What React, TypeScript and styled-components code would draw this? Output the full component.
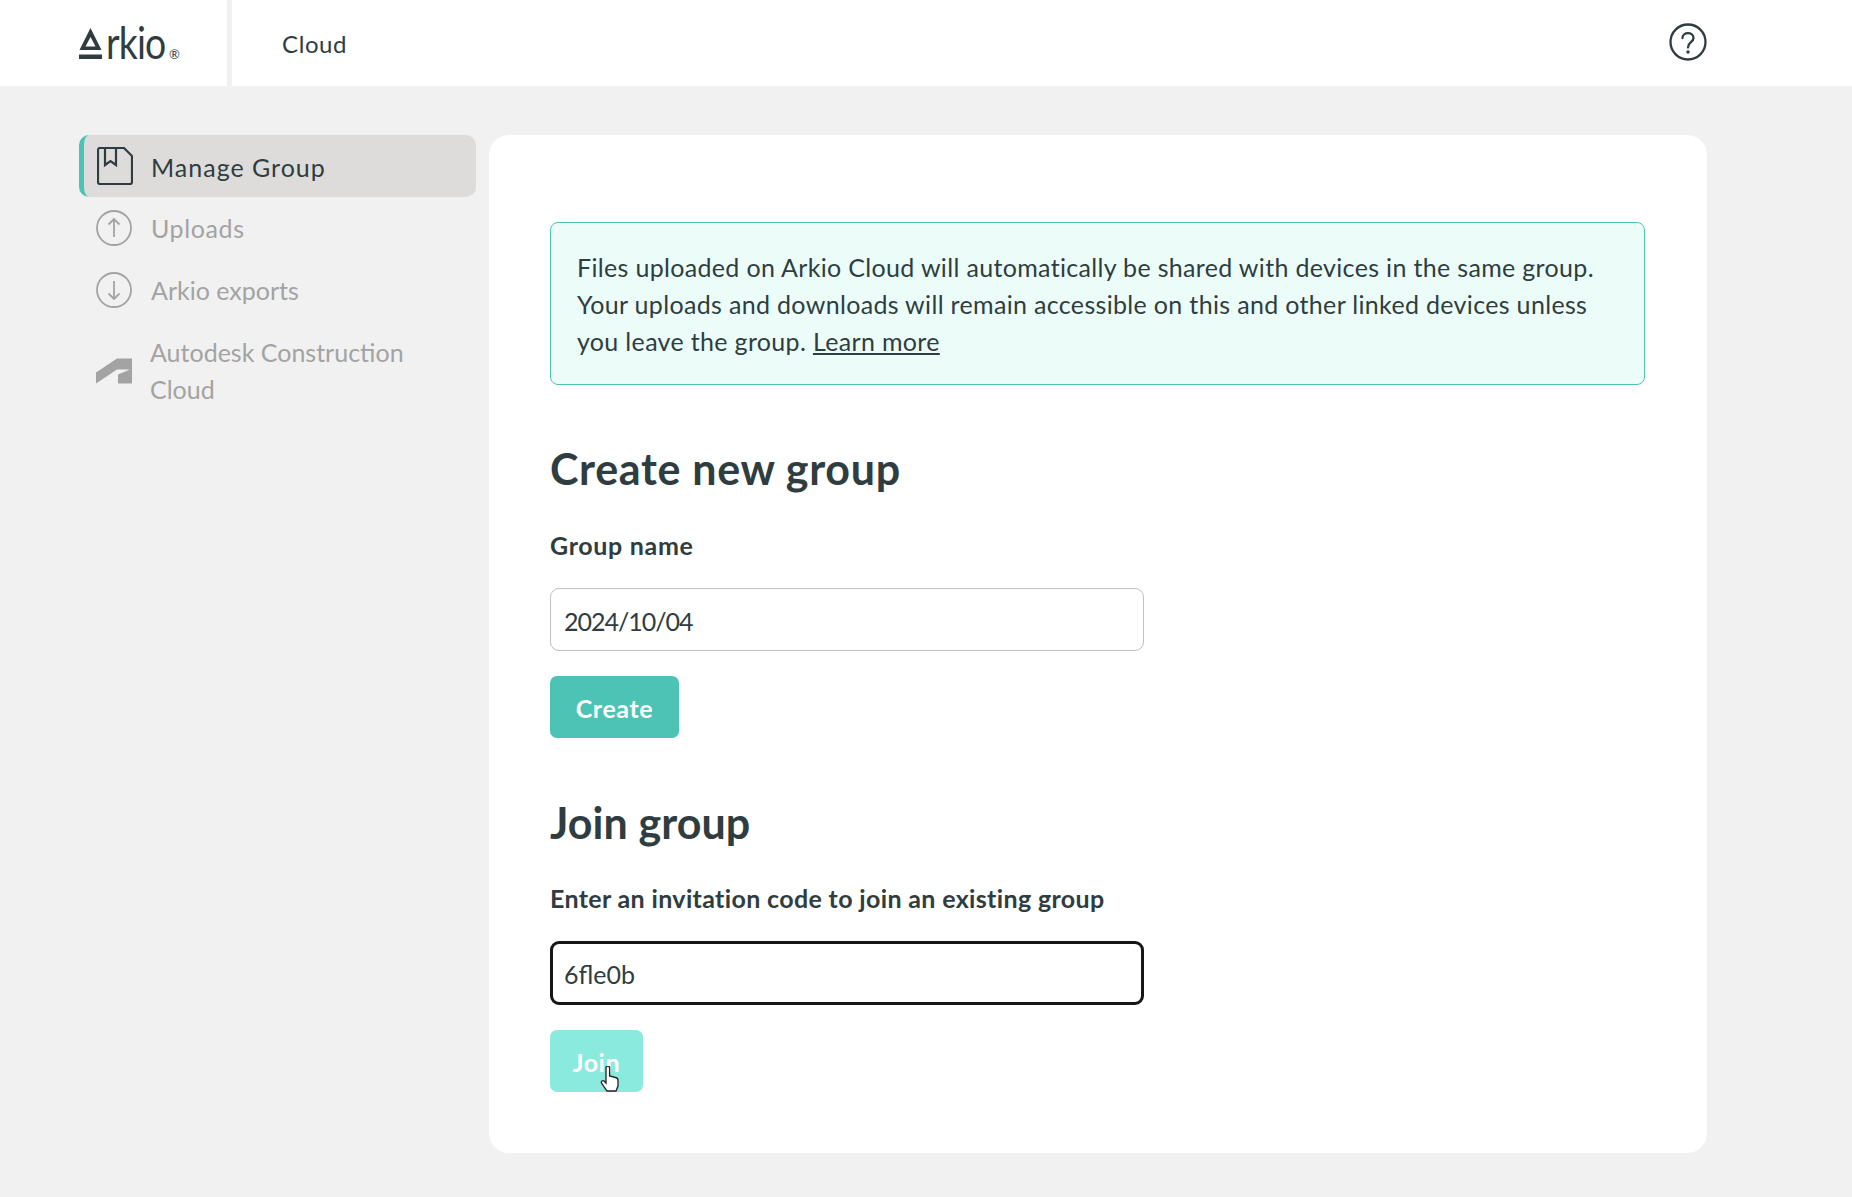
import React from "react";
import styled, { createGlobalStyle } from "styled-components";

const FONT = `"Lato", "Liberation Sans", sans-serif`;

const Global = createGlobalStyle`
  html, body { margin: 0; padding: 0; background: #f1f1f1; }
  body { font-family: ${FONT}; color: #2f3d40; }
  * { box-sizing: border-box; }
`;

const Page = styled.div`
  width: 1852px;
  height: 1197px;
  display: flex;
  flex-direction: column;
  background: #f1f1f1;
  overflow: hidden;
`;

const Header = styled.header`
  height: 86px;
  background: #fff;
  display: flex;
  align-items: stretch;
  padding-right: 145px;
`;

const LogoCell = styled.div`
  width: 232px;
  padding-left: 79px;
  border-right: 5px solid #f1f1f1;
  display: flex;
  align-items: center;
`;

const LogoWord = styled.div`
  display: flex;
  align-items: baseline;
  font-size: 44px;
  font-weight: 400;
  color: #2f3d40;
  line-height: 1;
  margin-top: -2px;
`;

const LogoMark = styled.svg`
  width: 23px;
  height: 31px;
  margin-right: 4px;
  align-self: flex-end;
  margin-bottom: 5px;
`;

const LogoLetters = styled.span`
  display: inline-block;
  letter-spacing: -1px;
  transform: scaleX(0.85);
  transform-origin: left bottom;
  margin-right: -10px;
`;

const Reg = styled.span`
  font-size: 13px;
  margin-left: 3px;
`;

const Title = styled.div`
  flex: 1;
  padding-left: 50px;
  display: flex;
  align-items: center;
  font-size: 24px;
  letter-spacing: 0.6px;
  color: #2f3d40;
`;

const HelpIcon = styled.svg`
  width: 38px;
  height: 38px;
  align-self: center;
  margin-top: -2px;
`;

const Body = styled.div`
  flex: 1;
  display: flex;
  gap: 13px;
  padding: 49px 145px 44px 79px;
`;

const Sidebar = styled.nav`
  width: 397px;
  display: flex;
  flex-direction: column;
`;

const NavItem = styled.div<{ $active?: boolean; $tall?: boolean }>`
  min-height: 62px;
  display: flex;
  align-items: center;
  gap: ${(p) => (p.$tall ? "18px" : p.$active ? "18px" : "19px")};
  font-size: 25px;
  line-height: 37px;
  color: ${(p) => (p.$active ? "#2f3d40" : "#a3a3a3")};
  background: ${(p) => (p.$active ? "#dedcda" : "transparent")};
  border-radius: 10px;
  border-left: ${(p) => (p.$active ? "5px solid #4dc3b6" : "none")};
  padding-left: ${(p) => (p.$active ? "13px" : "17px")};
  margin-top: ${(p) => (p.$tall ? "13px" : "0")};
`;

const NavIcon = styled.svg`
  width: 36px;
  height: 38px;
  flex: none;
`;

const NavLabel = styled.span<{ $track?: number; $down?: number }>`
  width: 270px;
  letter-spacing: ${(p) => p.$track ?? 0}px;
  padding-top: ${(p) => p.$down ?? 0}px;
`;

const Card = styled.main`
  width: 1218px;
  height: 1018px;
  background: #fff;
  border-radius: 20px;
  padding: 87px 62px 0 61px;
  display: flex;
  flex-direction: column;
  align-items: flex-start;
`;

const Notice = styled.div`
  width: 1095px;
  height: 163px;
  background: #ecfdf9;
  border: 1px solid #4dc3b6;
  border-radius: 8px;
  padding: 26px 26px;
  font-size: 25px;
  line-height: 37px;
  letter-spacing: 0.33px;
  color: #2f3d40;
`;

const Learn = styled.a`
  color: #2f3d40;
  text-decoration: underline;
`;

const Heading = styled.h2<{ $top: number; $bottom: number; $track: number }>`
  margin: ${(p) => p.$top}px 0 ${(p) => p.$bottom}px;
  font-size: 43px;
  line-height: 56px;
  font-weight: 700;
  letter-spacing: ${(p) => p.$track}px;
  color: #2f3d40;
`;

const Label = styled.label<{ $track: number }>`
  font-size: 25px;
  line-height: 30px;
  font-weight: 700;
  letter-spacing: ${(p) => p.$track}px;
  color: #2f3d40;
`;

const Input = styled.input<{ $focus?: boolean; $track?: number }>`
  width: 594px;
  height: ${(p) => (p.$focus ? "64px" : "63px")};
  margin-top: 28px;
  padding: 2px 13px 0;
  background: #fff;
  border: ${(p) => (p.$focus ? "3px solid #161616" : "1px solid #c4c1bc")};
  border-radius: 9px;
  padding-left: ${(p) => (p.$focus ? "11px" : "13px")};
  font-family: ${FONT};
  font-size: 25px;
  letter-spacing: ${(p) => p.$track ?? 0}px;
  color: #2f3d40;
  outline: none;
`;

const Button = styled.button<{ $light?: boolean; $width: number }>`
  position: relative;
  width: ${(p) => p.$width}px;
  height: 62px;
  margin-top: 25px;
  padding: 2px 0 0;
  border: none;
  border-radius: 7px;
  background: ${(p) => (p.$light ? "#8aeadd" : "#4dc3b6")};
  color: #fff;
  font-family: ${FONT};
  font-size: 25px;
  font-weight: 700;
  letter-spacing: 0.6px;
`;

const Pointer = styled.svg`
  position: absolute;
  left: 50px;
  top: 36px;
  width: 20px;
  height: 26px;
`;

export default function App() {
  return (
    <Page>
      <Global />
      <Header>
        <LogoCell>
          <LogoWord>
            <LogoMark viewBox="0 0 23 31">
              <path d="M11.5 0 L22.5 22 H0.5 Z M11.5 9 L6.5 18.5 H16.5 Z" fill="#2f3d40" fillRule="evenodd" />
              <rect x="0" y="26.5" width="23" height="4.5" fill="#2f3d40" />
            </LogoMark>
            <LogoLetters>rkio</LogoLetters>
            <Reg>®</Reg>
          </LogoWord>
        </LogoCell>
        <Title>Cloud</Title>
        <HelpIcon viewBox="0 0 38 38" fill="none" stroke="#2f3d40" strokeWidth="2.3">
          <circle cx="19" cy="19" r="17.5" />
          <path d="M13.5 15 C13.5 8.5 24.5 8.5 24.5 15 C24.5 19.5 19 19 19 24.5" strokeLinecap="round" />
          <circle cx="19" cy="29" r="1.7" fill="#2f3d40" stroke="none" />
        </HelpIcon>
      </Header>
      <Body>
        <Sidebar>
          <NavItem $active>
            <NavIcon viewBox="0 0 36 38" fill="none" stroke="#2f3d40" strokeWidth="2.2">
              <path d="M3 1 H27 L35 9 V35 a2 2 0 0 1 -2 2 H3 a2 2 0 0 1 -2 -2 V3 a2 2 0 0 1 2 -2 Z" strokeLinejoin="round" />
              <path d="M8 1 V18 L13.5 14 L19 18 V1" />
            </NavIcon>
            <NavLabel $track={1} $down={2}>Manage Group</NavLabel>
          </NavItem>
          <NavItem>
            <NavIcon viewBox="0 0 36 38" fill="none" stroke="#a3a3a3" strokeWidth="1.8">
              <circle cx="18" cy="19" r="17" />
              <path d="M18 28 V10 M12.5 15.5 L18 10 L23.5 15.5" />
            </NavIcon>
            <NavLabel $track={0.6}>Uploads</NavLabel>
          </NavItem>
          <NavItem>
            <NavIcon viewBox="0 0 36 38" fill="none" stroke="#a3a3a3" strokeWidth="1.8">
              <circle cx="18" cy="19" r="17" />
              <path d="M18 10 V28 M12.5 22.5 L18 28 L23.5 22.5" />
            </NavIcon>
            <NavLabel>Arkio exports</NavLabel>
          </NavItem>
          <NavItem $tall>
            <NavIcon viewBox="0 0 36 38">
              <path d="M0 20.5 L21 6.5 H36 V31.5 H22 V22.5 L34 17.5 H21 L0 31.5 Z" fill="#a3a3a3" />
            </NavIcon>
            <NavLabel>Autodesk Construction Cloud</NavLabel>
          </NavItem>
        </Sidebar>
        <Card>
          <Notice>
            Files uploaded on Arkio Cloud will automatically be shared with devices in the same group. Your uploads and
            downloads will remain accessible on this and other linked devices unless you leave the group.{" "}
            <Learn>Learn more</Learn>
          </Notice>
          <Heading $top={56} $bottom={33} $track={0.67}>Create new group</Heading>
          <Label $track={0.68}>Group name</Label>
          <Input $track={-1} defaultValue="2024/10/04" />
          <Button $width={129}>Create</Button>
          <Heading $top={57} $bottom={32} $track={0.06}>Join group</Heading>
          <Label $track={0.35}>Enter an invitation code to join an existing group</Label>
          <Input $focus defaultValue="6fle0b" />
          <Button $light $width={93}>
            Join
            <Pointer viewBox="0 0 20 26">
              <path
                d="M6 2 a1.8 1.8 0 0 1 3.6 0 V10 l6 1.5 a3 3 0 0 1 2.4 3 V20 l-2 5 H7 L1.5 17 a1.7 1.7 0 0 1 2.6 -2 L6 17 Z"
                fill="#fff"
                stroke="#222"
                strokeWidth="1.3"
              />
            </Pointer>
          </Button>
        </Card>
      </Body>
    </Page>
  );
}
